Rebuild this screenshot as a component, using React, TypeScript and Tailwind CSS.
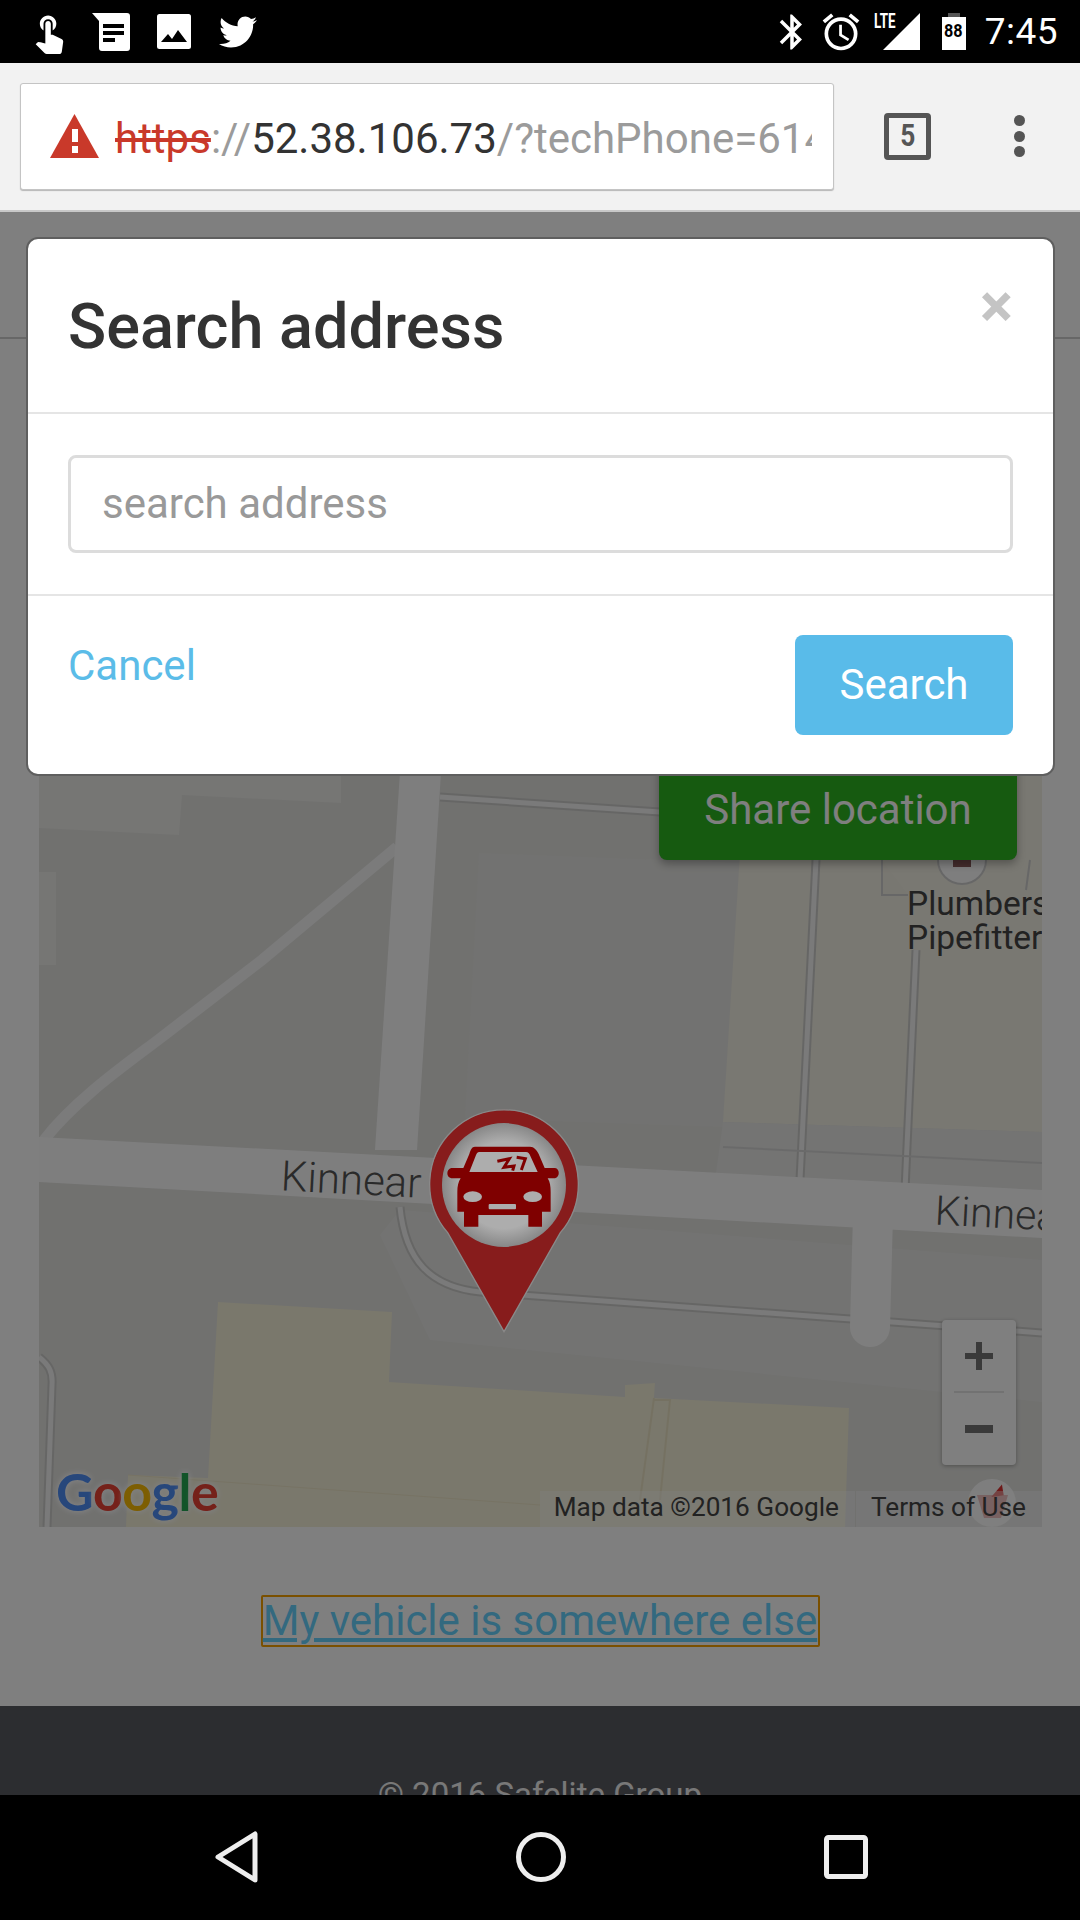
import React from 'react';
import { FaTwitter } from 'react-icons/fa';
import { MdAccessAlarm, MdBluetooth, MdTouchApp } from 'react-icons/md';

const StatusBar: React.FC = () => (
  <div className="relative flex h-[63px] shrink-0 items-center justify-between bg-black pl-[27px] pr-[22px] text-white">
    <div className="flex items-center">
      <MdTouchApp className="h-[44px] w-[44px]" />
      {/* note icon */}
      <svg viewBox="0 0 40 38" className="ml-[20px] h-[38px] w-[40px]">
        <path d="M1 0H36a3 3 0 0 1 3 3V35a3 3 0 0 1-3 3H11a3 3 0 0 1-3-3V8Z" fill="#fff" />
        <rect x="12" y="11" width="21" height="4" fill="#000" />
        <rect x="12" y="18" width="21" height="4" fill="#000" />
        <rect x="12" y="25" width="12" height="4" fill="#000" />
      </svg>
      {/* picture icon */}
      <svg viewBox="0 0 34 35" className="ml-[26px] h-[35px] w-[34px]">
        <rect width="34" height="35" rx="2.5" fill="#fff" />
        <path d="M4 28L11 20L15 25L21 16L30 28Z" fill="#000" />
      </svg>
      <FaTwitter className="ml-[28px] h-[38px] w-[38px]" />
    </div>
    <div className="flex items-center">
      <MdBluetooth className="h-[42px] w-[42px]" />
      <MdAccessAlarm className="ml-[6px] h-[44px] w-[44px]" />
      <div className="relative ml-[11px] h-[37px] w-[46px]">
        <svg viewBox="0 0 37 37" className="absolute left-[9px] top-0 h-[37px] w-[37px]">
          <path d="M37 0V37H0Z" fill="#fff" />
        </svg>
        <span className="absolute left-0 top-[-2px] origin-left scale-x-[0.67] text-[20px] font-bold leading-[20px]">LTE</span>
      </div>
      <div className="ml-[22px] flex flex-col items-center">
        <div className="h-[4px] w-[12px] bg-[#555]" />
        <div className="flex h-[33px] w-[24px] items-start justify-center bg-white pt-[5px] text-[18px] font-bold leading-[18px] text-black">
          <span className="scale-x-90">88</span>
        </div>
      </div>
      <span className="ml-[19px] text-[37px] leading-none tracking-[0.5px]">7:45</span>
    </div>
  </div>
);

const Toolbar: React.FC = () => (
  <div className="flex h-[147px] shrink-0 items-center bg-[#f2f2f2] pb-[1px]">
    <div className="ml-[20px] flex h-[107px] w-[814px] items-center rounded-[3px] border border-[#c4c4c4] bg-white pl-[29px] shadow-[0_1px_1px_rgba(0,0,0,0.25)]">
      <svg viewBox="0 0 49 44" className="h-[44px] w-[49px] shrink-0">
        <path d="M24.5 0L49 44H0Z" fill="#c9392a" />
        <rect x="22" y="15" width="6" height="13" fill="#fff" />
        <rect x="22" y="32" width="6" height="7" fill="#fff" />
      </svg>
      <div className="ml-[16px] mt-[5px] w-[697px] overflow-hidden whitespace-nowrap text-[42px] leading-[50px] text-[#9b9b9b]">
        <span className="text-[#c9392a] line-through">https</span>
        ://
        <span className="text-[#333]">52.38.106.73</span>
        /?techPhone=614
      </div>
    </div>
    <div className="ml-[50px] flex h-[47px] w-[47px] items-center justify-center rounded-[4px] border-[5px] border-[#555] text-[31px] font-bold text-[#555]">
      <span className="scale-x-[0.85]">5</span>
    </div>
    <div className="ml-[83px] flex flex-col gap-[4.5px]">
      <div className="h-[11px] w-[11px] rounded-full bg-[#555]" />
      <div className="h-[11px] w-[11px] rounded-full bg-[#555]" />
      <div className="h-[11px] w-[11px] rounded-full bg-[#555]" />
    </div>
  </div>
);

// map tiles, in page coordinates
const MapTiles: React.FC = () => (
  <svg viewBox="39 379 1003 1148" className="absolute inset-0 h-full w-full">
    <rect x="39" y="379" width="1003" height="1148" fill="#e2e2df" />
    <path d="M39 379H341V803L182 795L179 835L39 828Z" fill="#ececE8" />
    <path d="M39 872H56V965H39Z" fill="#ececE8" />
    <path d="M479 853L740 863L723 1127L465 1118Z" fill="#e5e5e2" />
    <path d="M770 379H1042V1132L723 1122Z" fill="#f2f0e4" />
    <path d="M723 1122L1042 1132V1200L715 1180Z" fill="#e8e8e6" />
    <path d="M380 1235L430 1340L1042 1402V1260L400 1210Z" fill="#e7e7e5" />
    <path d="M218 1302L392 1312L389 1382L625 1397L625 1385L655 1383L654 1398L849 1408L845 1527H126L128 1475L208 1478Z" fill="#f4f0d8" />
    <path d="M654 1398L640 1500M654 1400H670L660 1500" stroke="#ebe3c4" strokeWidth="2" fill="none" />
    <path d="M128 1475L540 1505" stroke="#eee6c8" strokeWidth="1" fill="none" />
    {/* thin roads */}
    <g fill="none" strokeLinecap="butt">
      <path d="M440 797L660 812" stroke="#cdcdcb" strokeWidth="9" />
      <path d="M440 797L660 812" stroke="#f4f4f4" strokeWidth="5" />
      <path d="M816 860L800 1180M916 950L905 1190" stroke="#cdcdcb" strokeWidth="9" />
      <path d="M816 860L800 1180M916 950L905 1190" stroke="#f4f4f4" strokeWidth="5" />
      <path d="M723 1147L1042 1163" stroke="#d5d5d5" strokeWidth="2" />
      <path d="M400 1207C405 1260 430 1287 480 1292L1042 1333" stroke="#cdcdcb" strokeWidth="9" />
      <path d="M400 1207C405 1260 430 1287 480 1292L1042 1333" stroke="#f4f4f4" strokeWidth="5" />
      <path d="M39 1357C49 1365 53 1372 52 1385L47 1527" stroke="#cdcdcb" strokeWidth="9" />
      <path d="M39 1357C49 1365 53 1372 52 1385L47 1527" stroke="#f4f4f4" strokeWidth="5" />
    </g>
    {/* main roads */}
    <path d="M397 847L262 960L158 1040C125 1065 75 1100 44 1140" stroke="#f6f6f6" strokeWidth="11" fill="none" />
    <path d="M426 379H466L417 1150H375Z" fill="#fdfdfd" />
    <path d="M39 1137L1042 1190V1238L39 1182Z" fill="#fdfdfd" />
    <path d="M873 1215L870 1327" stroke="#fdfdfd" strokeWidth="40" strokeLinecap="round" fill="none" />
    {/* Plumbers pin */}
    <path d="M882 860V895H908M1030 860L1026 890" stroke="#cfcfcf" strokeWidth="2" fill="#f1eee2" />
    <circle cx="962" cy="860" r="24" fill="#fdfdfd" stroke="#cfcfcf" strokeWidth="2" />
    <rect x="953" y="858" width="18" height="9" fill="#8a5a5a" />
    {/* attribution pin */}
    <circle cx="992" cy="1503" r="24" fill="#fdfdfd" />
    <path d="M977 1495H1008L1001 1518H984Z" fill="#e89a9a" />
    <path d="M995 1495L1002 1494L1001 1488Z" stroke="#d33" strokeWidth="3" fill="#d33" />
  </svg>
);

// pin sits above the dimming layer, its face is brighter than the dimmed page
const Marker: React.FC = () => (
  <svg viewBox="0 0 840 840" className="absolute left-[341px] top-[701px] z-20 h-[280px] w-[280px]">
    <defs>
      <radialGradient id="pinFace">
        <stop offset="70%" stopColor="#adadad" />
        <stop offset="100%" stopColor="#878787" />
      </radialGradient>
    </defs>
    <path d="M372 755L203 458A223 223 0 1 1 541 458Z" fill="#871c1c" stroke="#8a8a8a" strokeWidth="4" />
    <circle cx="372" cy="315" r="186" fill="url(#pinFace)" />
    <path
      d="M285 200H450C462 200 470 210 476 222L494 264H525C540 266 540 292 525 295H503C510 305 512 320 512 335V395H486V440H445V405H295V440H252V395H232V335C232 320 235 305 242 295H214C198 292 198 268 214 264H250L268 222C272 210 275 200 285 200Z"
      fill="#7f0000"
    />
    <path d="M298 216H438C445 216 449 222 452 230L473 276H268L286 230C289 222 292 216 298 216Z" fill="#adadad" />
    <path d="M352 244L388 236L372 262L402 258L398 272M410 232L436 236L424 270" stroke="#7f0000" strokeWidth="9" fill="none" />
    <ellipse cx="278" cy="350" rx="28" ry="16" fill="#adadad" />
    <ellipse cx="458" cy="350" rx="28" ry="16" fill="#adadad" />
    <rect x="326" y="372" width="82" height="16" rx="3" fill="#adadad" />
  </svg>
);

const MapPanel: React.FC = () => (
  <div className="relative ml-[39px] mt-[40px] h-[1148px] w-[1003px] overflow-hidden">
    <MapTiles />
    <div className="absolute left-[620px] top-[377px] flex h-[104px] w-[358px] items-center justify-center rounded-[8px] bg-[#2cb420] pt-[2px] text-[42px] text-white shadow-[0_4px_8px_rgba(0,0,0,0.3)]">
      Share location
    </div>
    <div className="absolute left-[868px] top-[508px] text-[33.5px] leading-[34px] text-[#444]">
      Plumbers
      <br />
      Pipefitter
    </div>
    <span className="absolute left-[242px] top-[779px] rotate-[3deg] text-[42px] font-light leading-[44px] text-[#555]">Kinnear</span>
    <span className="absolute left-[896px] top-[813px] rotate-[3deg] text-[41px] font-light leading-[44px] text-[#555]">Kinnear</span>
    <Marker />
    {/* zoom control */}
    <div className="absolute left-[903px] top-[941px] flex h-[145px] w-[74px] flex-col items-center rounded-[4px] bg-white shadow-[0_1px_4px_rgba(0,0,0,0.3)]">
      <svg viewBox="0 0 28 28" className="mt-[22px] h-[28px] w-[28px]">
        <path d="M11 0H17V11H28V17H17V28H11V17H0V11H11Z" fill="#747474" />
      </svg>
      <div className="mt-[21px] h-[2px] w-[50px] bg-[#e5e5e5]" />
      <div className="mt-[32px] h-[8px] w-[28px] bg-[#747474]" />
    </div>
    {/* Google logo, real letters */}
    <div className="absolute left-[17px] top-[1082px] font-['Lato',sans-serif] text-[52px] font-bold leading-[60px] tracking-[-0.5px] [text-shadow:0_0_6px_#fff,0_0_6px_#fff]">
      <span className="text-[#4f8ef7]">G</span>
      <span className="text-[#ea4335]">o</span>
      <span className="text-[#fbbc05]">o</span>
      <span className="text-[#4f8ef7]">g</span>
      <span className="text-[#24a853]">l</span>
      <span className="text-[#ea4335]">e</span>
    </div>
    {/* attribution */}
    <div className="absolute bottom-0 right-0 flex h-[36px] items-center text-[26.2px] text-[#444]">
      <div className="flex h-[36px] items-center bg-white/40 pb-[3px] pl-[14px] pr-[16px]">Map data ©2016 Google</div>
      <div className="ml-[1px] flex h-[36px] items-center bg-white/40 pb-[3px] pl-[15px] pr-[16px]">Terms of Use</div>
    </div>
  </div>
);

const Modal: React.FC = () => (
  <div className="absolute left-[26px] top-[25px] z-20 w-[1029px] rounded-[12px] border-2 border-[#5f5f5f] bg-white">
    <div className="relative flex h-[173px] items-center pl-[40px] pt-[1px]">
      <h4 className="text-[63px] font-medium leading-none text-[#333]">Search address</h4>
      <span className="absolute right-[40px] top-[36px] text-[62px] font-bold leading-none text-[#c4c4c4]">×</span>
    </div>
    <div className="border-y-2 border-[#e5e5e5] px-[40px] py-[41px]">
      <div className="flex h-[98px] items-center rounded-[8px] border-[3px] border-[#dcdcdc] pb-[2px] pl-[31px] text-[42px] text-[#999]">
        search address
      </div>
    </div>
    <div className="flex justify-between px-[40px] pb-[39px] pt-[39px]">
      <span className="mt-[9px] text-[42px] leading-[44px] text-[#5bbce8]">Cancel</span>
      <button className="h-[100px] w-[218px] rounded-[8px] bg-[#59bbe9] pb-[2px] text-[42px] text-white">Search</button>
    </div>
  </div>
);

const NavBar: React.FC = () => (
  <div className="flex h-[125px] shrink-0 items-center justify-between bg-black pb-[2px] pl-[214px] pr-[212px]">
    <svg viewBox="0 0 44 52" className="h-[52px] w-[44px]">
      <path d="M41 3V49L4 26Z" fill="none" stroke="#eee" strokeWidth="5" strokeLinejoin="round" />
    </svg>
    <svg viewBox="0 0 50 50" className="h-[50px] w-[50px]">
      <circle cx="25" cy="25" r="22.5" fill="none" stroke="#eee" strokeWidth="5" />
    </svg>
    <svg viewBox="0 0 44 44" className="h-[44px] w-[44px]">
      <rect x="2.5" y="2.5" width="39" height="39" rx="2" fill="none" stroke="#eee" strokeWidth="5" />
    </svg>
  </div>
);

const App: React.FC = () => {
  return (
    <div className="flex h-[1920px] w-[1080px] flex-col overflow-hidden bg-white font-['Roboto',sans-serif]">
      <StatusBar />
      <Toolbar />
      <div className="relative min-h-0 flex-1 overflow-hidden border-t-2 border-[#c8c8c8]">
        <div className="h-[127px] border-b-2 border-[#cfcfcf]" />
        <MapPanel />
        <div className="mt-[68px] flex justify-center">
          <a className="flex h-[52px] w-[559px] items-center justify-center rounded-[2px] border-2 border-[#f5a000] text-[42px] leading-none text-[#66d2ff] underline">
            My vehicle is somewhere else
          </a>
        </div>
        <div className="mt-[59px] flex h-[200px] justify-center bg-[#585a60] pt-[69px] text-[33px] leading-[40px] text-[#f0f0f0]">
          © 2016 Safelite Group
        </div>
        <div className="absolute inset-0 z-10 bg-black/50" />
        <Modal />
      </div>
      <NavBar />
    </div>
  );
};

export default App;
